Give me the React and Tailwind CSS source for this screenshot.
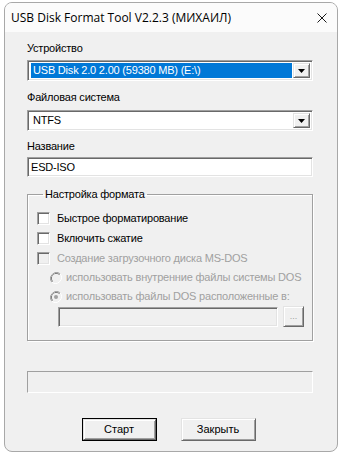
import React from "react";

const FONT = { fontFamily: '"Liberation Sans", Arial, sans-serif' };

// classic 3D edges
const SUNKEN =
  "border border-t-[#a0a0a0] border-l-[#a0a0a0] border-r-white border-b-white shadow-[inset_1px_1px_0_#696969,inset_-1px_-1px_0_#e3e3e3]";
const RAISED =
  "border border-t-[#e3e3e3] border-l-[#e3e3e3] border-r-[#696969] border-b-[#696969] shadow-[inset_1px_1px_0_#ffffff,inset_-1px_-1px_0_#a0a0a0]";

function Arrow() {
  return (
    <div className={`w-[17px] h-full bg-[#f0f0f0] flex items-center justify-center ${RAISED}`}>
      <svg width="7" height="4" viewBox="0 0 7 4">
        <path d="M0 0h7L3.5 4z" fill="#000" />
      </svg>
    </div>
  );
}

function Combo({ value, selected }) {
  return (
    <div className={`h-[21px] bg-white flex items-stretch p-[2px] ${SUNKEN}`}>
      <div className="flex-1 flex items-center pl-[1px] pr-[1px]">
        <span
          className={`w-full h-[15px] leading-[15px] pl-[2px] text-[11px] whitespace-nowrap tracking-[-0.2px] ${selected ? "bg-[#0078d7] text-white" : "text-black"}`}
        >
          {value}
        </span>
      </div>
      <Arrow />
    </div>
  );
}

function Check({ label, disabled }) {
  return (
    <div className="h-[20px] flex items-center gap-[7px]">
      <div
        className={`w-[13px] h-[13px] shrink-0 ${disabled ? "bg-[#f0f0f0]" : "bg-white"} border border-t-[#a0a0a0] border-l-[#a0a0a0] border-r-white border-b-white shadow-[inset_1px_1px_0_#696969,inset_-1px_-1px_0_#e3e3e3]`}
      />
      <span className={`text-[11px] leading-[13px] whitespace-nowrap tracking-[-0.2px] ${disabled ? "text-[#a0a0a0]" : "text-black"}`}>
        {label}
      </span>
    </div>
  );
}

function Radio({ label, checked }) {
  return (
    <div className="h-[19px] flex items-center gap-[4px] pl-[13px]">
      <svg width="12" height="12" viewBox="0 0 12 12" className="shrink-0">
        <path d="M10.2 1.8A6 6 0 0 0 1.8 10.2" fill="none" stroke="#a0a0a0" strokeWidth="1" />
        <path d="M9.5 2.5A5 5 0 0 0 2.5 9.5" fill="none" stroke="#696969" strokeWidth="1" />
        <path d="M1.8 10.2A6 6 0 0 0 10.2 1.8" fill="none" stroke="#ffffff" strokeWidth="1" />
        <circle cx="6" cy="6" r="4" fill="#f0f0f0" />
        {checked && <circle cx="6" cy="6" r="2" fill="#a0a0a0" />}
      </svg>
      <span className="text-[11px] leading-[13px] whitespace-nowrap tracking-[-0.2px] text-[#a0a0a0]">{label}</span>
    </div>
  );
}

function Label({ children, className = "" }) {
  return (
    <div className={`h-[13px] text-[11px] leading-[13px] whitespace-nowrap tracking-[-0.2px] text-black ${className}`}>
      {children}
    </div>
  );
}

export default function App() {
  return (
    <div className="w-[341px] h-[457px] bg-white pl-[4px] pt-[2px]" style={FONT}>
      <div className="w-[334px] h-[450px] rounded-[8px] border border-[#a8a8a8] overflow-hidden flex flex-col bg-[#f0f0f0]">
        {/* Title bar */}
        <div className="h-[29px] shrink-0 bg-[#fbfbfb] flex items-center justify-between pl-[6px] pr-[10px]">
          <span className="text-[12px] text-black" style={{ fontFamily: '"Open Sans", "Noto Sans", sans-serif' }}>
            USB Disk Format Tool V2.2.3 (МИХАИЛ)
          </span>
          <svg width="10" height="10" viewBox="0 0 10 10">
            <path d="M0.5 0.5l9 9M9.5 0.5l-9 9" stroke="#1a1a1a" strokeWidth="1" />
          </svg>
        </div>

        {/* Body */}
        <div className="flex-1 flex flex-col pl-[22px] pr-[24px]">
          <Label className="mt-[10px]">Устройство</Label>
          <div className="mt-[5px]">
            <Combo value="USB Disk 2.0 2.00 (59380 MB) (E:\)" selected />
          </div>

          <Label className="mt-[10px]">Файловая система</Label>
          <div className="mt-[6px]">
            <Combo value="NTFS" />
          </div>

          <Label className="mt-[9px]">Название</Label>
          <div className={`mt-[4px] h-[20px] bg-white flex items-center pl-[3px] text-[11px] tracking-[-0.2px] ${SUNKEN}`}>ESD-ISO</div>

          <fieldset className="mt-[11px] border border-[#a0a0a0] shadow-[1px_1px_0_#ffffff,inset_1px_1px_0_#ffffff] pt-[7px] pb-[13px] pl-[9px] pr-[8px]">
            <legend className="ml-[6px] px-[2px] text-[11px] leading-[13px] tracking-[-0.2px] text-black">Настройка формата</legend>
            <Check label="Быстрое форматирование" />
            <Check label="Включить сжатие" />
            <Check label="Создание загрузочного диска MS-DOS" disabled />
            <Radio label="использовать внутренние файлы системы DOS" />
            <Radio label="использовать файлы DOS расположенные в:" checked />
            <div className="flex items-center gap-[5px] pl-[21px]">
              <div className={`w-[220px] h-[20px] bg-[#f0f0f0] ${SUNKEN}`} />
              <div className={`w-[21px] h-[21px] bg-[#f0f0f0] flex items-center justify-center text-[9px] text-[#a0a0a0] ${RAISED}`}>
                ...
              </div>
            </div>
          </fieldset>

          <div className="mt-[30px] h-[22px] border border-t-[#a0a0a0] border-l-[#a0a0a0] border-r-white border-b-white" />

          <div className="mt-[25px] flex justify-center gap-[24px] pr-[3px]">
            <div className="w-[75px] h-[23px] border border-black">
              <div className={`w-full h-full flex items-center justify-center text-[11px] text-black ${RAISED}`}>Старт</div>
            </div>
            <div className={`w-[75px] h-[23px] flex items-center justify-center text-[11px] text-black ${RAISED}`}>Закрыть</div>
          </div>
        </div>
      </div>
    </div>
  );
}
